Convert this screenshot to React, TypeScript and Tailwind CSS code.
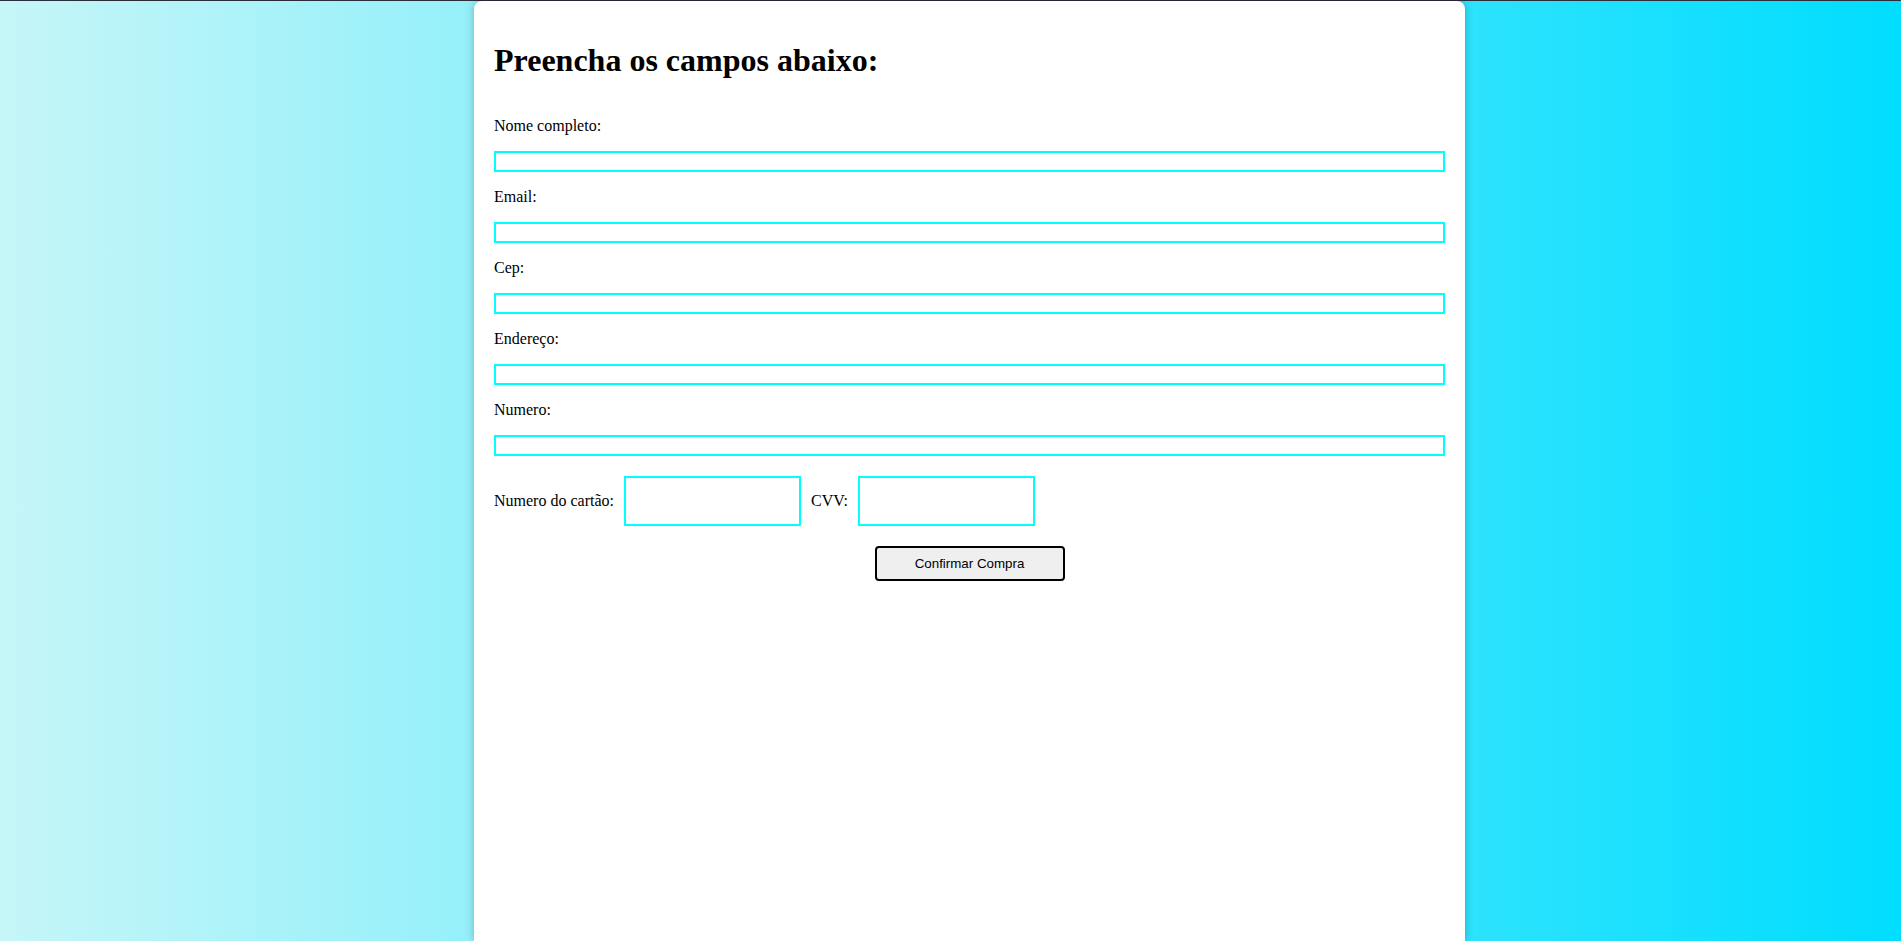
import React from "react";

const campos = ["Nome completo:", "Email:", "Cep:", "Endereço:", "Numero:"];

const App = () => {
  return (
    <div className="h-[941px] overflow-hidden bg-linear-to-r/srgb from-[#c6f6f8] to-[#00ddff] font-['Liberation_Serif',serif] text-[16px] text-black">
      <div className="h-px bg-[#2a2d3a]" />
      <div className="ml-[474px] min-h-[940px] w-[991px] rounded-t-lg bg-white px-5 pt-5 shadow-[0_0_8px_rgba(0,0,0,0.25)]">
        <h1 className="mt-[21px] text-[32px] font-bold leading-[37px]">
          Preencha os campos abaixo:
        </h1>
        <form className="mt-[38px]">
          {campos.map((c, i) => (
            <div key={c} className={i === 0 ? "" : "mt-4"}>
              <p className="h-[18px] leading-[18px]">{c}</p>
              <input
                type="text"
                className="mt-4 block h-[21px] w-full border-2 border-[#00ffff] bg-white outline-none"
              />
            </div>
          ))}
          <div className="mt-5 flex h-[50px] items-center">
            <span>Numero do cartão:</span>
            <input
              type="text"
              className="ml-[10px] h-[50px] w-[177px] border-2 border-[#00ffff] bg-white outline-none"
            />
            <span className="ml-[10px]">CVV:</span>
            <input
              type="text"
              className="ml-[10px] h-[50px] w-[177px] border-2 border-[#00ffff] bg-white outline-none"
            />
          </div>
          <button
            type="button"
            className="mx-auto mt-5 block h-[35px] w-[190px] rounded-[4px] border-2 border-black bg-[#efefef] font-['Liberation_Sans',Arial,sans-serif] text-[13.33px] text-black"
          >
            Confirmar Compra
          </button>
        </form>
      </div>
    </div>
  );
};

export default App;
